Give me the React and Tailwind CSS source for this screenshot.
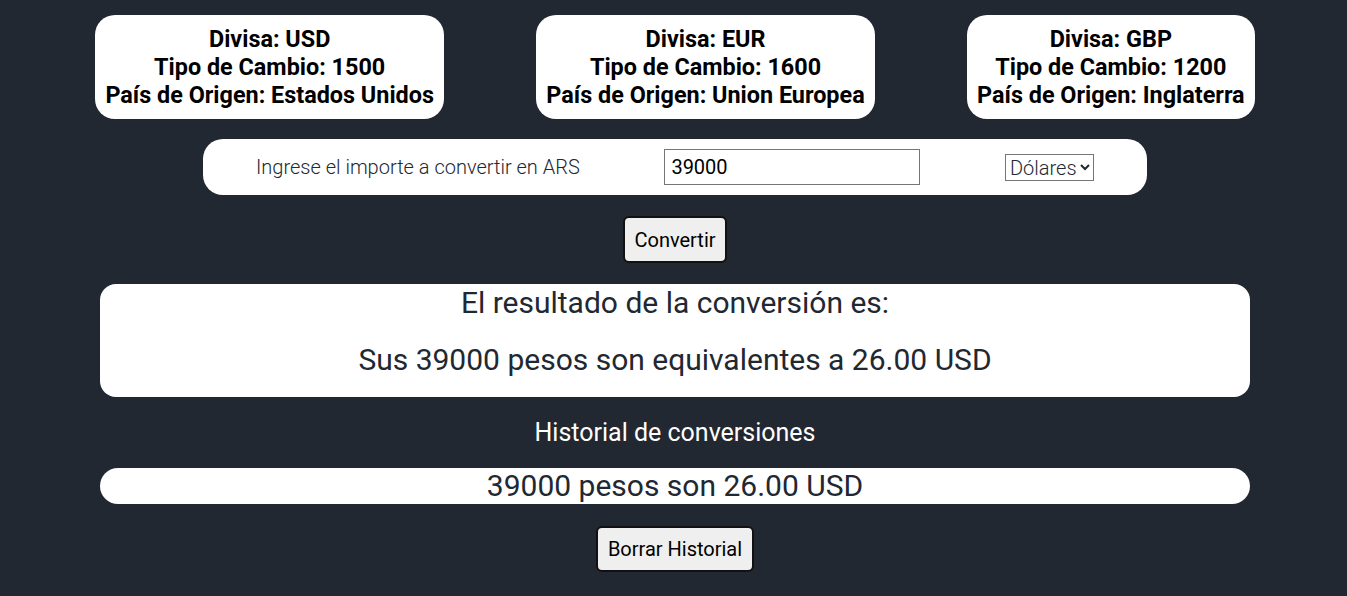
import React, { useState } from "react";

const divisas = [
  { code: "USD", tipo: 1500, pais: "Estados Unidos" },
  { code: "EUR", tipo: 1600, pais: "Union Europea" },
  { code: "GBP", tipo: 1200, pais: "Inglaterra" },
];

const App = () => {
  const [importe, setImporte] = useState("39000");
  const [moneda, setMoneda] = useState("USD");
  const [historial, setHistorial] = useState(["39000 pesos son 26.00 USD"]);

  return (
    <div
      className="min-h-screen bg-[#222831] flex flex-col items-center pt-[15px] pl-[3px] text-[#222831]"
      style={{ fontFamily: "Roboto, 'Noto Sans', sans-serif" }}
    >
      {/* Cards */}
      <div className="w-full flex justify-evenly">
        {divisas.map((d) => (
          <div
            key={d.code}
            className="bg-white rounded-[20px] px-[10px] h-[104px] flex flex-col justify-center text-center text-black font-bold text-[23.4px] leading-[28px]"
          >
            <p>Divisa: {d.code}</p>
            <p>Tipo de Cambio: {d.tipo}</p>
            <p>País de Origen: {d.pais}</p>
          </div>
        ))}
      </div>

      {/* Input row */}
      <div className="mt-[20px] w-[944px] h-[56px] bg-white rounded-[20px] flex items-center justify-between px-[53px]">
        <label className="font-light text-[20px] text-[#222831]">
          Ingrese el importe a convertir en ARS
        </label>
        <input
          type="text"
          value={importe}
          onChange={(e) => setImporte(e.target.value)}
          className="w-[256px] h-[36px] border border-[#767676] px-[6px] text-[20px] text-black outline-none"
        />
        <select
          value={moneda}
          onChange={(e) => setMoneda(e.target.value)}
          className="h-[27px] border border-[#767676] text-[20px] leading-[24px] font-light text-[#222831] bg-white"
        >
          <option value="USD">Dólares</option>
          <option value="EUR">Euros</option>
          <option value="GBP">Libras</option>
        </select>
      </div>

      <button className="mt-[21px] w-[104px] h-[47px] bg-[#efefef] border-2 border-[#111] rounded-[6px] text-[20px] text-black">
        Convertir
      </button>

      {/* Resultado */}
      <div className="mt-[21px] w-[1150px] h-[113px] bg-white rounded-[16px] flex flex-col items-center text-[30px] leading-[36px]">
        <p className="mt-[1px]">El resultado de la conversión es:</p>
        <p className="mt-[21px]">Sus 39000 pesos son equivalentes a 26.00 USD</p>
      </div>

      <h2 className="mt-[21px] text-white text-[25px] leading-[30px]">
        Historial de conversiones
      </h2>

      {historial.map((h, i) => (
        <div
          key={i}
          className="mt-[20px] w-[1150px] h-[36px] bg-white rounded-full flex items-center justify-center text-[30px] leading-[34px]"
        >
          {h}
        </div>
      ))}

      <button
        onClick={() => setHistorial([])}
        className="mt-[22px] w-[158px] h-[46px] bg-[#efefef] border-2 border-[#111] rounded-[6px] text-[20px] text-black"
      >
        Borrar Historial
      </button>
    </div>
  );
};

export default App;
